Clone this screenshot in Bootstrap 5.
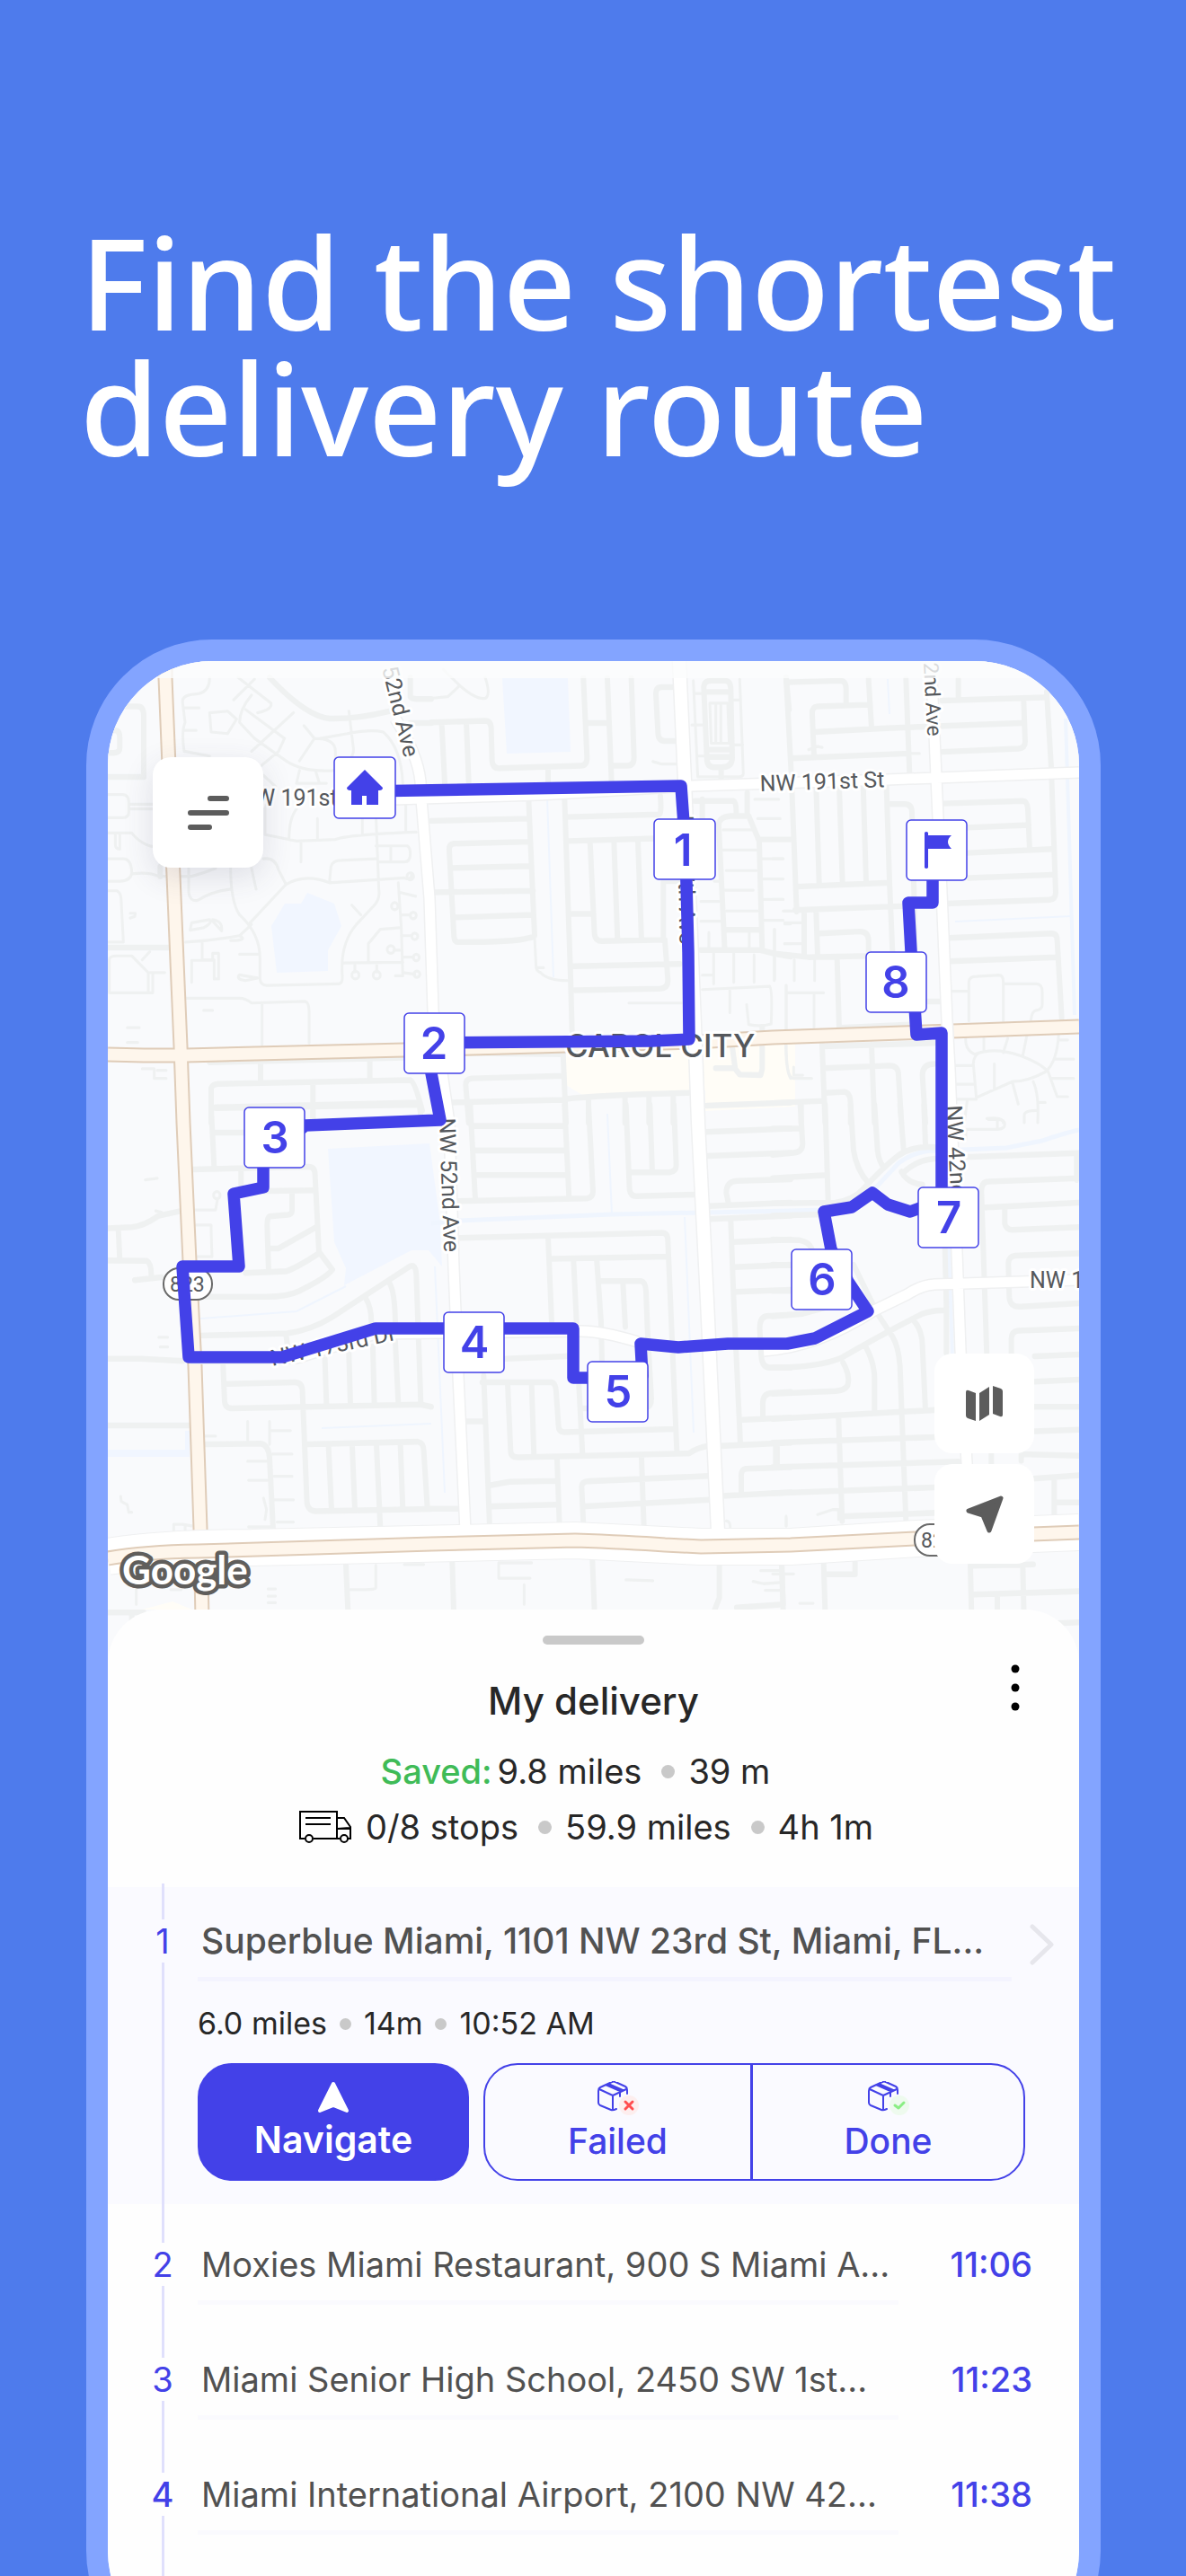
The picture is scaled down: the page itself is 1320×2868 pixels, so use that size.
<!DOCTYPE html>
<html lang="en">
<head>
<meta charset="utf-8">
<meta name="viewport" content="width=device-width, initial-scale=1">
<title>Find the shortest delivery route</title>
<link rel="stylesheet" href="https://cdn.jsdelivr.net/npm/bootstrap@5.3.0/dist/css/bootstrap.min.css">
<style>
:root{--ink:#272727;--muted:#515151;--brand:#4341e8;--rail:#e0e0fc;--rule:#f4f4ff}
body{background:#4e7bec;font-family:"Inter","Liberation Sans",sans-serif;color:var(--ink)}
.page{min-height:100vh;overflow:hidden}
.headline{font-family:"Noto Sans","Open Sans",sans-serif;font-weight:500;font-size:142px;line-height:140px;color:#fff;padding:243px 60px 189px 89px;margin:0}
.phone{margin:0 95px -112px 96px;border:24px solid #83a4ff;border-radius:140px;background:#fefefe;overflow:hidden}
.map-svg{display:block;width:100%;height:auto}
.map-btn{background:#fff;border:0;border-radius:20px;width:111px;height:111px;padding:0}
.map-menu{width:123px;height:123px;top:107px;left:50px;box-shadow:0 10px 34px rgba(60,60,90,.14)}
.map-tools{right:50px;bottom:112px;gap:12px}
.minor path,.minor circle{fill:none;stroke:#eff1f1;stroke-linecap:round;stroke-linejoin:round;stroke-width:9}
.minor .wide{stroke-width:18}
.canal{fill:none;stroke:#eff5fe}
.street-edge{fill:none;stroke:#eff0f1;stroke-linejoin:round}
.street{fill:none;stroke:#fff;stroke-linejoin:round}
.hwy-edge{fill:none;stroke:#dfccb8;stroke-width:17}
.hwy{fill:none;stroke:#fef6ec;stroke-width:13}
.place{font-family:Roboto,sans-serif;font-size:25px;fill:#55585c;stroke:#fff;stroke-width:6px;stroke-linejoin:round;paint-order:stroke}
.place-sm{font-size:23px}
.place-city{font-family:Inter,sans-serif;font-size:35px;font-weight:500}
.pin rect{fill:#fff;stroke:var(--brand);stroke-width:1.5px}
.pin text{font-weight:600;font-size:49px;fill:var(--brand);text-anchor:middle}
.sheet{margin-top:-61px;background:#fefefe;border-radius:60px 60px 0 0;padding-top:29px}
.grabber{width:113px;height:10px;border-radius:5px;background:#c9c9c9;margin:0 auto 18px}
.title-row{padding:0 50px;height:75px}
.title-row h2{font-size:42px;font-weight:500;line-height:60px;padding-top:15px;margin:0}
.kebab{width:41px;height:60px}
.stats{padding-top:17px;padding-bottom:36px;font-size:38px;line-height:62px}
.savings{padding-right:40px}
.saved{color:#3fbb57;font-weight:500;margin-right:6px}
.dot{display:inline-block;width:15px;height:15px;border-radius:50%;background:#c9c9c9;margin:0 15px 0 22px}
.dot-sm{width:13px;height:13px;margin:0 14px}
.rail{width:122px;font-size:38px;line-height:48px;color:var(--brand)}
.rail i{width:3px;background:var(--rail)}
.stop .seg{height:43px}
.current{background:#fafaff}
.current .seg{height:40px;margin-top:-4px}
.address{font-size:38px;line-height:56px;color:var(--muted);padding:39px 0 12px 4px;border-bottom:5px solid #fafafe}
.stop{min-height:128px}
.eta{width:201px;padding:39px 52px 0 0;font-size:38px;line-height:56px;font-weight:500;color:var(--brand)}
.current .address{padding-top:32px;font-size:39px;font-weight:500;border-color:var(--rule)}
.go{width:75px;padding:41px 0 0 20px}
.leg{font-size:34px;line-height:46px;padding-top:24px;margin-bottom:21px}
.body-col{margin-left:-22px;min-width:0}
.actions{gap:16px;margin:0 60px 26px 0;height:131px}
.act{font-size:39px;line-height:48px;font-weight:500;padding:18px 0 20px;border:2px solid var(--brand);border-radius:38px;color:var(--brand)}
.act svg{display:block;margin:0 auto 5px}
.act-go{width:302px;font-size:41px;background:var(--brand);color:#fff;font-weight:600}
.act-go:hover{background:#3735d0;color:#fff}
.btn-group>.act-failed{flex:0 0 299px}
.btn-group>.act:not(:first-child){margin-left:-2px}
</style>
</head>
<body>
<main class="page d-flex flex-column">
<h1 class="headline">Find the shortest<br>delivery route</h1>
<section class="phone flex-grow-1 d-flex flex-column">
<div class="position-relative">
<svg class="map-svg" viewBox="120 736 1081 1117" role="img" aria-label="Route map of Carol City">
<defs>
<path id="streets" d="M440 800Q465 840 468 870L469 890L478 1000L482 1125L500 1250L505 1412L510 1532L518 1705M1036 736L1040 819L1044 911L1048 993L1054 1136L1057 1190L1065 1394L1069 1503L1080 1700M405 891L600 885L770 875L987 868L1201 860M212 1512H330L418 1485L647 1482Q670 1482 710 1494M850 1504Q910 1500 973 1459L1010 1441Q1025 1431 1040 1430L1201 1425"/>
<path id="avenue" d="M756 736L762 869L774 1165L777 1250L787 1448L799 1705"/>
<path id="frontage" d="M120 1733Q180 1723 280 1723L640 1715L780 1722H880L1020 1713L1201 1706"/>
<path id="roads" d="M120 1174L160 1175H207L450 1169L774 1160L860 1155L1201 1143M184 736V755L193 975L201 1165L204 1250L211 1404L217 1521L223 1702L226 1853"/>
<path id="expressway" d="M120 1735Q160 1728 220 1727L480 1719L640 1715Q700 1717 740 1720L780 1722L880 1720L1020 1713L1201 1706"/>
<g id="parcel"><path d="M33 14V10Q33 7 31 6L20 1Q18 0 16 1L3 7Q1 8 1 11V24Q1 26 3 27L15 32Q17 33 21 31M2 9L17 16L32 9M17 16V32M9 4L25 11V17M12 3L28 10"/></g>
</defs>
<rect x="120" y="736" width="1081" height="1117" fill="#f9fafc"/>
<!-- parks and lakes -->
<path fill="#fffdf7" d="M630 1168L885 1156V1232L785 1237V1214L648 1219L630 1208Z"/>
<path fill="#fffdf7" d="M158 1792L192 1783L214 1792Z"/>
<path fill="#f1f6ff" d="M308 1083L302 1031L317 1006H335L342 994L372 1006L380 1031L365 1058V1081ZM559 755H632L635 837L564 839ZM365 1279L478 1273L490 1362L492 1410L477 1392L458 1392L383 1431L385 1412L372 1383ZM120 1614H206V1593H211V1622H120Z"/>
<g class="canal" stroke-width="5"><path d="M480 1362L510 1359L682 1352L880 1348L917 1347Q950 1345 975 1322L1000 1295Q1020 1280 1045 1281L1120 1278L1160 1270Q1190 1260 1201 1258"/><path stroke-width="2" d="M609 888L616 1088M676 1240L681 1352M762 1355L772 1595M484 1410L495 1662M223 1468L330 1460L385 1432M358 1590L480 1585M1063 1026L1193 1020M988 756L990 795"/><path stroke-width="4" d="M1056 1390L1060 1510M1186 800L1196 1130"/></g>
<!-- local streets, one group per map tile -->
<g class="minor" transform="translate(80,690) scale(.3333,.3571)">
<path d="M460 180Q460 230 410 232Q365 235 370 260L378 320Q365 350 375 410L460 425M375 275H425M375 345H415M555 180L665 260Q670 280 620 290M540 250L610 185M600 235Q560 280 560 320L610 370L715 440Q770 475 870 470Q960 460 1040 460M580 280L710 370L690 410L600 480M460 290L520 285L550 310L520 355L465 350ZM740 290L600 410M775 330L810 370L760 440M810 370Q880 370 880 410V455M830 370L920 355M925 285L940 400Q945 440 880 460M920 355Q1000 340 1040 350Q1100 400 1105 510"/>
<path d="M760 470L750 510H850M815 475L825 505M640 485L680 520M120 545H170Q190 545 190 570V600Q190 617 170 617H120M190 575H270M190 590H270M120 665H200Q240 710 290 708M145 665V700Q145 715 160 715V665M120 745H170Q200 745 200 790Q195 815 160 815H120M200 792Q260 785 290 800H400Q440 790 480 775M120 845H150Q165 850 165 880L172 1005H120M125 1060Q125 1048 150 1048H200L255 1100V1163H125V1060M235 1060L260 1035M260 1100H310M270 1100V1163H250"/>
<path d="M390 775V850Q395 880 420 875Q470 845 530 840M530 770Q530 880 560 920Q630 980 628 1060V1120Q630 1140 650 1140L890 1135Q905 1135 903 1110Q895 1010 950 950L1010 890Q1030 870 1025 840L1015 600M645 560V670Q700 680 750 690L880 685Q920 670 1150 662M640 745Q680 740 690 780L715 825M600 775L615 840M590 950L715 825Q780 790 860 820Q940 815 1110 805Q1135 815 1135 790M860 820L865 770Q870 750 900 750L1015 745M765 690V755M725 685Q725 620 750 590M820 685V620M970 620V665M1015 705H1120Q1130 710 1130 730Q1130 755 1110 755H1025M1065 710V755M1115 560V660M935 890L965 920"/>
<path d="M990 1065V1010L1030 965L1095 960M905 1070L1105 1068M1090 820L1100 960L1105 1110H1080M1095 850L1148 862M1100 920H1130M1100 985H1133M1075 1030H1100M1105 1052H1140M1105 1100L1145 1105M945 1070V1098M1018 1070V1098"/>
<circle cx="1140" cy="922" r="10"/><circle cx="1145" cy="987" r="10"/><circle cx="1150" cy="1053" r="10"/><circle cx="1152" cy="1105" r="10"/><circle cx="947" cy="1108" r="12"/><circle cx="1018" cy="1108" r="12"/><circle cx="1065" cy="1028" r="12"/><circle cx="1130" cy="800" r="11"/><circle cx="1078" cy="893" r="11"/>
<path d="M395 965L400 945L460 935Q470 945 440 960L395 968M470 935Q505 940 500 970L470 940M435 1005V1060M380 1005Q470 1000 560 985Q590 1000 530 1000M560 985L600 950M435 1060H470V1040H490V1120H475V1060M400 1130V1062H470M560 1043H625M620 1117L580 1125Q545 1120 560 1107L620 1117M380 1180H560Q580 1180 600 1195L780 1190Q792 1195 792 1220V1320M635 1195V1325M185 1272H225M185 1318H220M440 1218H470M235 1400H275V1430H315M285 1405H315M195 915H212L210 925L195 930"/>
<path class="wide" d="M660 180Q780 300 860 308Q950 310 1060 285M120 270H220Q240 270 240 300V490H120M120 345H145Q160 345 160 370V400Q160 415 140 415H120M120 1022H325M460 1380L1110 1365M630 1375V1435M995 1370V1425M465 1568V1460Q470 1447 490 1447L1130 1435Q1145 1440 1170 1530M805 1445V1560M480 1520L1160 1505M1130 180V240Q1135 247 1150 247H1200M1130 322H1200M295 770V800"/>
</g>
<g class="minor" transform="translate(480,690) scale(.3333,.3571)">
<path d="M0 245L55 240L95 205L40 155M95 205Q150 250 180 245Q200 235 180 180M740 442L770 450H820M870 328H910M1030 185L1042 480Q1042 490 1020 490H890L875 190M1005 250H1030M1010 390H1040M880 230H905M890 425H915M345 990L350 1080Q350 1095 365 1100Q390 1125 455 1125M350 1085H375M660 1195H835M930 260H990L995 385H935ZM950 265V385M967 265V385"/>
<path d="M975 655H1070M965 718H1085M985 782H1085M1080 560H1160M1090 620H1165M1105 745H1175M1105 808H1175M1110 872H1175M1110 937H1175M980 843H1075M985 908H1090M900 878H960M900 940H965M960 815H945M927 975V1030M1062 975V1030M1147 965V1120M1010 1040V1130M1078 1045V1130M943 1040V1135M905 1108H940M905 1153L1130 1143Q1140 1145 1135 1260Q1100 1270 1060 1262L1053 1200M997 1155V1225M1185 1140V1280Q1180 1400 1200 1430M1180 908H1200M1180 948H1200M1180 1010H1200"/>
<path class="wide" d="M910 210Q910 190 935 190H980Q1000 190 1000 215L1005 430Q1005 460 970 460H945Q920 460 920 430ZM915 225H995M920 405H1005M920 428H1000M968 460V500M1105 1270V1400L1100 1420L1030 1418L1015 1400L1005 1330M950 1398H1010M1185 180L1195 280"/>
<path class="wide" d="M0 320L180 315Q200 315 200 340L203 440Q205 465 230 463L500 455Q520 455 520 430L508 182M35 325L45 510M117 320L125 505M390 460V505M588 182L602 505M520 322H590M668 182L677 430Q677 455 655 455H605M805 210H770Q750 210 750 230L757 350Q757 378 780 378H820"/>
<path class="wide" d="M325 560L345 985Q345 990 320 993Q280 1005 90 1005Q78 1005 76 990L60 720Q58 700 75 698L330 692M0 627L325 620M65 774L335 768M0 850L340 845M80 928L340 920M445 555L465 1110L470 1280M450 615L760 607Q770 607 765 550M458 690L745 682M530 690L545 980Q548 1002 570 1002L780 998M610 690L622 1000M690 690L702 1000M470 917H535M775 815V1000M780 815H830M780 1000L790 1120Q792 1148 765 1150L480 1155M475 1080L830 1073"/>
<path class="wide" d="M880 565H1010Q1020 570 1018 610M1055 540V610M905 560V620M960 640Q960 615 1000 612H1060L1095 690L1105 1030M960 640L980 1030M1095 685H1200M985 967H1095M900 1030H1100Q1160 1045 1200 1050M65 1350L440 1355M65 1505L440 1497Q480 1485 860 1475M125 1568L115 1450Q115 1432 135 1430L440 1422M440 1350L450 1568M525 1490V1568M647 1485V1568M727 1485V1568M808 1485V1568M920 1515L1200 1505"/>
</g>
<g class="minor" transform="translate(860,690) scale(.3333,.3571)">
<path d="M120 405L150 395L165 398M460 417H490M655 1250V1130Q655 1112 680 1112L755 1108Q770 1108 770 1130V1250M600 1158H655M775 1135H880Q900 1135 900 1160V1200Q900 1215 880 1218Q865 1220 862 1250M0 683H55M0 745H35M0 808H35M0 872H35M35 908H80M40 945H95M40 1010H95M5 965V1125M72 1060V1125M140 1060V1125M45 1140V1280M45 1163H170M138 1163V1270M45 1320Q45 1430 70 1430H130M70 1395V1420H100"/>
<path d="M645 1300Q640 1340 675 1355Q740 1330 830 1360Q900 1385 920 1410L950 1487H985M705 1300V1345M785 1305L770 1350M850 1290L835 1360M955 1290Q950 1380 910 1410Q850 1440 800 1440L680 1490L670 1385Q670 1360 690 1350M610 1390H665M610 1448H675M610 1495H680M740 1385V1465M800 1440L820 1510M870 1440Q890 1480 885 1568M960 1310H985M945 1370H1005M930 1430H1005M650 1495L640 1568M715 1555Q770 1550 770 1568M890 1505H910M840 1568V1545Q840 1530 880 1530"/>
<path class="wide" d="M45 185L62 480L80 910M45 195L225 190Q245 190 245 215V262M320 185L330 335M445 185L457 480M320 265L150 270Q130 272 132 295L138 425M138 350L380 338L830 322M65 432L455 417M620 185V240M565 252L905 242M838 250L843 380Q843 400 820 402L565 412M915 225L930 460L945 850Q945 872 925 873L580 885M145 520L155 820M222 515L233 820M302 510L312 820M380 520L390 815L400 1035M80 832L390 820M390 575H440Q465 575 465 600L472 850L475 1030M75 905L430 893M105 910V1050M145 910L150 1050M155 978L290 972Q320 972 320 1000V1040M0 1040L120 1052L320 1048M215 1055L222 1275"/>
<path class="wide" d="M570 573L835 565Q850 565 852 590L858 715M650 648L855 640M650 727L935 715M655 805L935 795M590 992L930 978Q950 978 950 1000L965 1240M590 1065L950 1052M225 1272L460 1262M515 1190H560M165 1325L175 1568M165 1330L540 1320M330 1325L340 1568M170 1398L390 1390Q420 1390 420 1420L430 1568M175 1475L240 1472Q260 1475 260 1510V1568M0 1507L170 1500M95 1510V1568M540 1385Q500 1385 500 1420L510 1568"/>
</g>
<g class="minor" transform="translate(80,1230) scale(.3333,.3635)">
<path d="M587 970V1030M660 970V1040M665 998H730M670 1070H735M675 1138H735M675 1210H740M685 1278H740M587 1092H655M590 1150H655M590 1293H670M640 1205L650 1240L645 1270M163 1200L165 1215L185 1225L190 1248H200M245 230L285 225M280 325L300 330M405 322H480L486 290M415 368H465Q465 400 468 465H415M290 712H320M295 742H320M440 1015H480M340 1310V1285H370L400 1290M378 1290V1310M1015 1410V1480Q1015 1487 930 1485M1110 1408H1175M215 1480V1530M330 1485H365M655 1483H680M655 1505H680M655 1525H680"/><circle cx="484" cy="277" r="11"/>
<path class="wide" d="M465 10L475 190M470 85H575M480 10L1160 0L1165 30M805 10V40M400 198L790 190Q812 190 812 215L825 450L870 505Q850 530 760 570Q720 588 650 588H430M565 200V270M600 265L805 262M735 270V325Q735 335 720 337L660 342Q652 345 652 370L657 510M660 440H690L815 375M580 515L715 510Q750 500 825 455M120 378L200 375Q240 372 290 340L365 325M155 380L160 475M120 477L250 478Q265 485 265 520M210 537L300 528M425 707L720 700Q800 690 870 650L1120 500Q1148 480 1150 520L1165 910M1060 545Q1078 570 1080 665M980 590Q1000 620 1000 665M715 705L722 750M120 778H230L370 785M120 982H395"/>
<path class="wide" d="M505 800L510 910Q512 930 535 930L1165 918L1200 925M510 855L745 850Q770 850 770 880L785 1220Q790 1245 815 1245L1200 1238M845 780L850 915M925 760L930 915M1005 740L1010 915M1080 725L1090 915M785 1040L1155 1032Q1175 1035 1175 1060L1187 1235M857 1045L867 1240M936 1045L945 1240M1017 1040L1030 1295M1097 1040L1105 1238M440 1040L630 1038Q655 1040 660 1080L672 1300M915 1410L922 1550M120 1555H240M200 1560V1620"/>
</g>
<g class="minor" transform="translate(480,1230) scale(.3333,.3635)">
<path d="M335 1403H225V1450H330M310 1470V1530M650 1455L740 1458M1100 1427H1165M1075 1460L1110 1467L1165 1463M1115 1487H1165M985 1275Q1000 1275 998 1300M1185 1260V1290"/>
<path class="wide" d="M130 0L147 290M445 0L460 285M525 0L540 265Q540 285 520 287L90 295M140 65H445M148 140H450M150 215H455M650 0L662 260Q665 280 685 280L885 275M730 0L738 205M810 0L818 185Q818 205 795 207H665M95 408L770 392Q790 392 790 415L820 1060M390 405L402 665M400 472L790 465M475 475L485 665M553 480L567 665L570 790M565 540L700 540Q715 542 717 570L722 690L735 900Q735 925 715 927M640 545L648 680M250 778L450 770M170 850H400Q415 850 417 880L425 985Q425 1002 445 1003L810 993"/>
<path class="wide" d="M175 830L195 1290M255 855L265 1060Q265 1080 290 1080L860 1068Q890 1050 925 1045M335 855L343 1075M493 860L505 1070M120 970H180M500 930H520M420 1085L428 1285M200 1165L260 1155L415 1152M200 1230L415 1225M508 1285L502 1170Q502 1155 525 1153L925 1137M515 1230L930 1210M702 1080L710 1290M0 1237H90M915 83L1200 73M920 157L1200 147M1200 228L1020 233Q985 235 985 270L992 300M925 310L1200 300M930 350L1200 340M1000 355L1010 600L1032 1035M1010 420L1200 413M1010 497L1200 490M1015 573L1200 567"/>
<path class="wide" d="M1200 643L1120 647Q1095 650 1097 690L1102 770Q1105 805 1130 805H1200M1200 880L1135 883Q1105 885 1107 920V955M1040 965L1200 958M965 1045L1200 1035M1155 1040V1105M1200 1110L1050 1115Q1033 1118 1035 1140V1190M970 1198L1200 1187M70 1400L75 1550M538 1395L545 1550M962 1405V1510L945 1550M1170 1405L1175 1530L1020 1540"/>
</g>
<g class="minor" transform="translate(860,1230) scale(.3333,.3635)">
<path d="M150 1255L200 1240H220V1270M45 1265V1290M0 1437H70M90 1527H135M720 45H750Q775 45 775 60Q775 75 750 75H640M645 105V75M750 45V75"/>
<path class="wide" d="M0 73H95M92 0L100 120Q100 145 70 147L0 153M175 0L185 290M0 225L180 215M0 340L200 335M0 302L210 300Q270 290 300 260Q370 190 420 155Q470 125 540 130M260 0L270 140Q280 200 320 240M340 0L350 140Q355 175 370 190M425 0L437 135M505 0L510 120M640 160L1023 148M440 205Q480 170 540 165M430 205Q450 240 500 245M1015 150V230M1023 225L720 235Q697 235 697 265L715 770M700 315L1023 300M775 320V365Q780 383 800 383L1023 375M1023 455L810 462Q785 465 787 490L790 590Q793 622 830 618L1023 608M1023 685L820 692Q795 695 797 720V765M875 770L1023 765M875 848L1023 842M875 925H1023M875 1000L1023 995"/>
<path class="wide" d="M730 1070V1100M830 1090V1070L1023 1075M870 1145L1023 1135M940 1150V1260M950 1218H1023M0 413L90 415Q120 420 130 440M0 490L60 492M0 570H60M0 648L100 640L180 620M270 490L350 640L400 710Q420 740 425 800L445 1275M0 805Q150 805 230 775Q350 710 500 640Q540 628 570 630M470 660Q500 690 500 740L510 935M310 740Q340 790 340 840V935M235 790Q260 830 250 860Q240 875 210 877L0 885M575 440L580 620V760M0 962L540 935M0 1035L540 1018M0 1110L620 1093M0 1190L540 1172M220 960L232 1275M245 1260L540 1250M10 1040V1105"/>
<path class="wide" d="M30 1400L35 1550M170 1400L175 1550M180 1438H275V1400M660 1410L665 1600M665 1412L870 1408M835 1410L840 1600M670 1500L1023 1490M750 1500V1600M900 1590L1023 1585"/>
</g>
<!-- highways and avenues: a casing first, the road surface over it -->
<use href="#roads" class="hwy-edge"/><use href="#roads" class="hwy"/>
<g class="street-edge"><use href="#streets" stroke-width="14"/><use href="#avenue" stroke-width="17"/><use href="#frontage" stroke-width="42"/></g>
<g class="street"><use href="#streets" stroke-width="11"/><use href="#avenue" stroke-width="14"/><use href="#frontage" stroke-width="40"/></g>
<use href="#expressway" class="hwy-edge"/><use href="#expressway" class="hwy"/>
<!-- names -->
<text class="place" transform="translate(425,744) rotate(76)">52nd Ave</text>
<text class="place place-sm" transform="translate(1028,738) rotate(87)">2nd Ave</text>
<text class="place" x="284" y="897">W 191st</text>
<text class="place" transform="translate(846,881) rotate(-2)">NW 191st St</text>
<text class="place" transform="translate(754,908) rotate(89)">NW 47th Ave</text>
<text class="place" transform="translate(489,1245) rotate(88)">NW 52nd Ave</text>
<text class="place" transform="translate(1053,1231) rotate(87)">NW 42nd Ave</text>
<text class="place" x="1146" y="1434">NW 1</text>
<text class="place" transform="translate(303,1521) rotate(-12)">NW 173rd Dr</text>
<text x="629" y="1177" class="place place-city">CAROL CITY</text>
<rect x="182" y="1412" width="54" height="35" rx="17" fill="#fff" stroke="#6a6a6a" stroke-width="2"/><text class="place place-sm" x="189" y="1438">823</text>
<rect x="1018" y="1697" width="54" height="35" rx="17" fill="#fff" stroke="#6a6a6a" stroke-width="2"/><text class="place place-sm" x="1025" y="1723">826</text>
<rect x="120" y="736" width="1081" height="19" fill="#fbfcfd" opacity=".8"/>
<!-- planned route -->
<path fill="none" stroke="#4341e8" stroke-width="13.5" stroke-linejoin="round" d="M405 881L758 875L763 945L766 1060L767 1157L725 1159L483 1161L480 1195L490 1247L340 1253L293 1290V1322L260 1329L266 1410H203L210 1511H314L418 1479H638V1534H688L715 1532L713 1496L755 1500L810 1496H876L907 1490L966 1460L944 1427L925 1391L917 1349L948 1344L971 1328L988 1341L1013 1349L1048 1336V1150L1020 1152L1018 1120L1014 1059L1011 1005H1038V960"/>
<!-- stops -->
<g class="pin"><rect x="372" y="843" width="68" height="68" rx="5"/><path fill="#4341e8" d="M406 857L426 877Q426 880 422 880H421V896H408V886H403V896H391V880H390Q386 880 386 877Z"/></g>
<g class="pin"><rect x="728" y="912" width="68" height="67" rx="5"/><text x="760" y="964">1</text></g>
<g class="pin"><rect x="450" y="1128" width="67" height="67" rx="5"/><text x="483" y="1179">2</text></g>
<g class="pin"><rect x="272" y="1233" width="67" height="67" rx="5"/><text x="306" y="1284">3</text></g>
<g class="pin"><rect x="494" y="1461" width="67" height="67" rx="5"/><text x="528" y="1512">4</text></g>
<g class="pin"><rect x="654" y="1516" width="67" height="67" rx="5"/><text x="688" y="1567">5</text></g>
<g class="pin"><rect x="881" y="1391" width="67" height="67" rx="5"/><text x="915" y="1442">6</text></g>
<g class="pin"><rect x="1022" y="1322" width="67" height="67" rx="5"/><text x="1056" y="1373">7</text></g>
<g class="pin"><rect x="964" y="1060" width="67" height="67" rx="5"/><text x="997" y="1111">8</text></g>
<g class="pin"><rect x="1009" y="913" width="67" height="67" rx="5"/><path fill="#4341e8" d="M1029 927Q1031 925 1033 927V930H1059Q1051 937 1059 945H1033V966Q1031 968 1029 966Z"/></g>
<text x="136" y="1764" style="font:700 44px Lato,sans-serif" fill="#fff" stroke="#605e5c" stroke-width="9" stroke-linejoin="round" paint-order="stroke">Google</text>
</svg>
<button class="map-btn map-menu position-absolute" type="button" aria-label="Menu"><svg width="48" height="42" viewBox="0 0 48 42" fill="none" stroke="#5c5c5c" stroke-width="6" stroke-linecap="round"><path d="M26 5H44M4 21H44M4 37H25"/></svg></button>
<div class="map-tools position-absolute d-flex flex-column">
<button class="map-btn" type="button" aria-label="Map type"><svg width="41" height="40" viewBox="0 0 41 40" fill="#5c5c5c"><path d="M0 7Q0 4 3 5L11 8V39L2 36Q0 35 0 33ZM15 8L26 1V32L15 39ZM30 0L39 3Q41 4 41 6V32Q41 35 38 34L30 31Z"/></svg></button>
<button class="map-btn" type="button" aria-label="My location"><svg width="44" height="44" viewBox="0 0 44 44"><path fill="#5c5c5c" stroke="#5c5c5c" stroke-width="5" stroke-linejoin="round" d="M40 4L4 18L20 23L27 40Z"/></svg></button>
</div>
</div>
<div class="sheet position-relative flex-grow-1 d-flex flex-column">
<div class="grabber"></div>
<div class="title-row d-flex justify-content-between align-items-start">
<span class="kebab"></span>
<h2>My delivery</h2>
<button class="kebab btn p-0 border-0 d-block" type="button" aria-label="More options"><svg class="d-block" width="41" height="60" viewBox="0 0 41 60" fill="#000"><circle cx="20" cy="9" r="4.5"/><circle cx="20" cy="30" r="4.5"/><circle cx="20" cy="51" r="4.5"/></svg></button>
</div>
<div class="stats">
<div class="savings d-flex justify-content-center align-items-center"><span class="saved">Saved:</span><span>9.8 miles</span><span class="dot"></span><span>39 m</span></div>
<div class="d-flex justify-content-center align-items-center pe-3"><svg class="me-3" width="58" height="36" viewBox="0 0 58 36" fill="none" stroke="#000" stroke-width="2"><path d="M6 31H1V1H42V31H16M42 8H50L57 18V31H54M45 31H42M43 20H57M43 20L56 19M7 8H35M7 15H35"/><circle cx="11" cy="31" r="4"/><circle cx="50" cy="31" r="4"/></svg><span>0/8 stops</span><span class="dot"></span><span>59.9 miles</span><span class="dot"></span><span>4h 1m</span></div>
</div>
<div class="current d-flex">
<div class="rail d-flex flex-column align-items-center flex-shrink-0"><i class="seg"></i><span>1</span><i class="flex-grow-1"></i></div>
<div class="body-col flex-grow-1">
<a class="d-flex text-decoration-none" href="#stop-1"><div class="address flex-grow-1 text-nowrap">Superblue Miami, 1101 NW 23rd St, Miami, FL...</div><div class="go"><svg class="d-block" width="27" height="46" viewBox="0 0 27 46" fill="none" stroke="#e6e6ec" stroke-width="5" stroke-linecap="round" stroke-linejoin="round"><path d="M3 3L24 23L3 43"/></svg></div></a>
<div class="leg d-flex align-items-center"><span>6.0 miles</span><span class="dot dot-sm"></span><span>14m</span><span class="dot dot-sm"></span><span>10:52 AM</span></div>
<div class="actions d-flex">
<button class="btn act act-go" type="button"><svg width="36" height="36" viewBox="0 0 36 36"><path fill="#fff" stroke="#fff" stroke-width="4" stroke-linejoin="round" d="M18 3L33 33L18 27L3 33Z"/></svg>Navigate</button>
<div class="btn-group flex-grow-1">
<button class="btn act act-failed" type="button"><svg width="46" height="38" viewBox="0 0 46 38" fill="none" stroke="#4341e8" stroke-width="2" stroke-linecap="round" stroke-linejoin="round"><use href="#parcel"/><circle cx="35" cy="27" r="11" fill="#fdeeee" stroke="none"/><path stroke="#ff4d4f" stroke-width="3" d="M31 23L39 31M39 23L31 31"/></svg>Failed</button>
<button class="btn act" type="button"><svg width="46" height="38" viewBox="0 0 46 38" fill="none" stroke="#4341e8" stroke-width="2" stroke-linecap="round" stroke-linejoin="round"><use href="#parcel"/><circle cx="35" cy="27" r="11" fill="#eefaee" stroke="none"/><path stroke="#8aee84" stroke-width="3" d="M30 27L34 30L40 24"/></svg>Done</button>
</div>
</div>
</div>
</div>
<div class="stop d-flex"><div class="rail d-flex flex-column align-items-center flex-shrink-0"><i class="seg"></i><span>2</span><i class="flex-grow-1"></i></div><div class="body-col flex-grow-1"><div class="address text-nowrap">Moxies Miami Restaurant, 900 S Miami A...</div></div><div class="eta text-end">11:06</div></div>
<div class="stop d-flex"><div class="rail d-flex flex-column align-items-center flex-shrink-0"><i class="seg"></i><span>3</span><i class="flex-grow-1"></i></div><div class="body-col flex-grow-1"><div class="address text-nowrap">Miami Senior High School, 2450 SW 1st...</div></div><div class="eta text-end">11:23</div></div>
<div class="stop d-flex"><div class="rail d-flex flex-column align-items-center flex-shrink-0"><i class="seg"></i><span class="fw-medium">4</span><i class="flex-grow-1"></i></div><div class="body-col flex-grow-1"><div class="address text-nowrap">Miami International Airport, 2100 NW 42...</div></div><div class="eta text-end">11:38</div></div>
<div class="rail d-flex flex-column align-items-center flex-grow-1"><i class="flex-grow-1"></i></div>
</div>
</section>
</main>
<script src="https://cdn.jsdelivr.net/npm/bootstrap@5.3.0/dist/js/bootstrap.bundle.min.js"></script>
</body>
</html>
